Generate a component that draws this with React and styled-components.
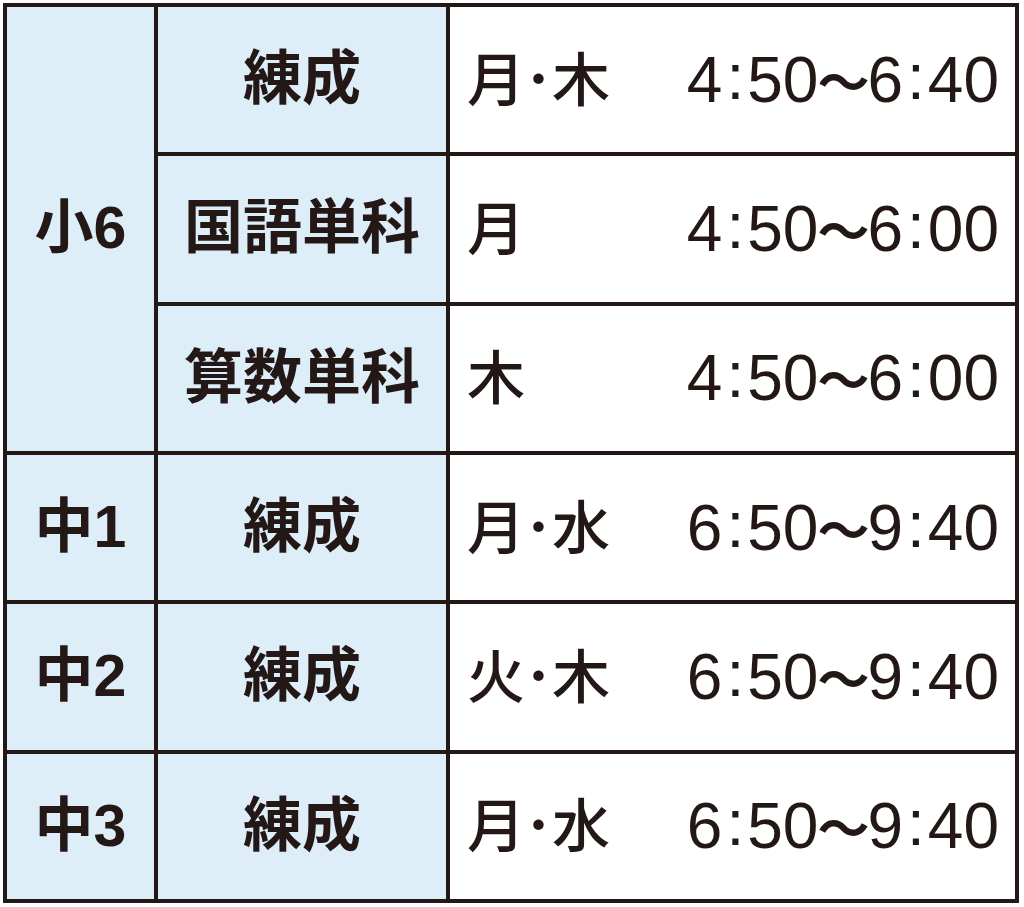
import React from "react";
import styled, { createGlobalStyle } from "styled-components";

const Global = createGlobalStyle`
  html, body { margin: 0; padding: 0; background: #ffffff; }
  body { font-family: "Liberation Sans", "Noto Sans CJK JP", sans-serif; color: #231815; }
`;

const Page = styled.div`
  padding: 3px 0 0 3px;
`;

const Table = styled.div`
  box-sizing: border-box;
  width: 1016px;
  height: 900px;
  padding: 4px;
  background: #231815;
  display: grid;
  grid-template-columns: 147px 288px 1fr;
  grid-template-rows: repeat(6, 1fr);
  gap: 4px;
`;

const Cell = styled.div`
  background: ${(p) => (p.$head ? "#ddeef9" : "#ffffff")};
  grid-row: ${(p) => (p.$span ? `span ${p.$span}` : "auto")};
  display: flex;
  align-items: center;
  justify-content: center;
  font-family: "Liberation Sans", "Noto Sans CJK JP", sans-serif;
  font-size: 59px;
  font-weight: 700;
  line-height: 1;
  color: #231815;
`;

const TimeCell = styled(Cell)`
  justify-content: space-between;
  padding: 0 16px 0 17px;
  font-weight: 400;
`;

const Days = styled.span`
  font-family: "Noto Sans CJK JP", sans-serif;
  font-weight: 500;
  font-size: 58px;
  letter-spacing: -1px;
  padding-bottom: 8px;
`;

const Time = styled.span`
  font-family: "Liberation Sans", sans-serif;
  font-weight: 400;
  font-size: 64px;
  display: flex;
  align-items: center;
`;

const Colon = styled.span`
  margin: 0 3px 0 4px;
  position: relative;
  top: -3px;
`;

const Wave = styled.span`
  font-family: "Noto Sans CJK JP", sans-serif;
  font-weight: 600;
  font-size: 52px;
  margin: 0 -2px 0 -1px;
`;

const rows = [
  { grade: "小6", span: 3, course: "練成", days: "月･木", from: ["4", "50"], to: ["6", "40"] },
  { course: "国語単科", days: "月", from: ["4", "50"], to: ["6", "00"] },
  { course: "算数単科", days: "木", from: ["4", "50"], to: ["6", "00"] },
  { grade: "中1", span: 1, course: "練成", days: "月･水", from: ["6", "50"], to: ["9", "40"] },
  { grade: "中2", span: 1, course: "練成", days: "火･木", from: ["6", "50"], to: ["9", "40"] },
  { grade: "中3", span: 1, course: "練成", days: "月･水", from: ["6", "50"], to: ["9", "40"] },
];

export default function App() {
  return (
    <Page>
      <Global />
      <Table>
        {rows.map((r, i) => (
          <React.Fragment key={i}>
            {r.grade && (
              <Cell $head $span={r.span}>
                {r.grade}
              </Cell>
            )}
            <Cell $head>{r.course}</Cell>
            <TimeCell>
              <Days>{r.days}</Days>
              <Time>
                {r.from[0]}
                <Colon>:</Colon>
                {r.from[1]}
                <Wave>〜</Wave>
                {r.to[0]}
                <Colon>:</Colon>
                {r.to[1]}
              </Time>
            </TimeCell>
          </React.Fragment>
        ))}
      </Table>
    </Page>
  );
}
